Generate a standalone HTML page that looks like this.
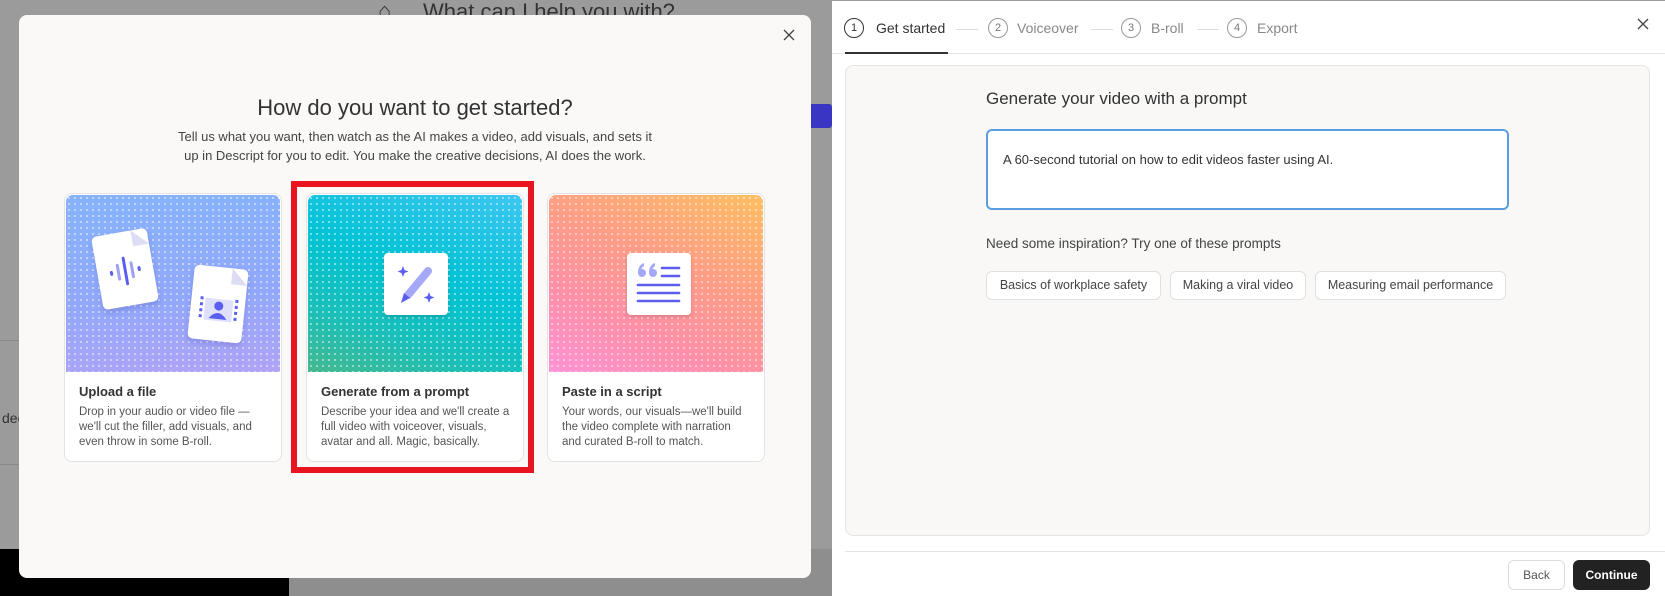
<!DOCTYPE html>
<html><head><meta charset="utf-8"><style>
*{box-sizing:border-box;margin:0;padding:0}
body{width:1665px;height:596px;overflow:hidden;background:#9b9b9b;font-family:"Liberation Sans",sans-serif;position:relative;color:#222}
.abs{position:absolute}
.modal{left:19px;top:15px;width:792px;height:563px;background:#faf9f8;border-radius:8px}
.card{position:absolute;top:193px;width:218px;height:269px;background:#fff;border:1px solid #e3e3e3;border-radius:8px;overflow:hidden}
.img{position:absolute;left:1px;top:1px;right:1px;height:177px;border-radius:7px 7px 0 0}
.dots{position:absolute;inset:0;background-image:radial-gradient(rgba(255,255,255,.55) 0.8px,transparent 1.2px);background-size:6px 6px}
.ct{position:absolute;left:14px;top:190px;font-size:13px;font-weight:bold;color:#333}
.cd{position:absolute;left:14px;top:211px;width:195px;font-size:11.5px;line-height:15px;color:#555}
.ibox{position:absolute;width:64px;height:62px;background:#fff;border-radius:4px;box-shadow:0 2px 4px rgba(0,0,0,.15)}
.chip{position:absolute;top:205px;height:29px;border:1px solid #e0e0e0;border-radius:6px;background:#fff;font-size:12.5px;color:#444;text-align:center;line-height:27px}
.step{position:absolute;top:17px;width:20px;height:20px;border:1px solid #999;border-radius:50%;font-size:11px;text-align:center;line-height:18px;color:#777}
.sl{position:absolute;top:19px;font-size:14px;color:#888}
.dash{position:absolute;top:28px;height:1px;background:#ddd}
</style></head><body>
<div class="abs" style="left:0;top:549px;width:289px;height:47px;background:#000"></div>
<div class="abs" style="left:289px;top:549px;width:543px;height:47px;background:#8e8e8e"></div>
<div class="abs" style="left:0;top:340px;width:19px;height:125px;border-top:1px solid #888;border-bottom:1px solid #888"></div>
<div class="abs" style="left:2px;top:410px;font-size:14px;color:#333">dec</div>
<div class="abs" style="left:770px;top:104px;width:62px;height:24px;background:#3b35c4;border-radius:3px"></div>
<div class="abs" style="left:378px;top:-2px;font-size:22px;color:#333">⌂</div>
<div class="abs" style="left:423px;top:-1px;font-size:22px;color:#333">What can I help you with?</div>

<div class="abs modal">
  <svg class="abs" style="right:16px;top:14px" width="12" height="12"><path d="M1 1L11 11M11 1L1 11" stroke="#444" stroke-width="1.3"/></svg>
  <div class="abs" style="left:0;width:792px;top:80px;text-align:center;font-size:22px;color:#333">How do you want to get started?</div>
  <div class="abs" style="left:0;width:792px;top:113px;text-align:center;font-size:13px;line-height:18.5px;color:#444">Tell us what you want, then watch as the AI makes a video, add visuals, and sets it<br>up in Descript for you to edit. You make the creative decisions, AI does the work.</div>
</div>

<div class="abs" style="left:291px;top:181px;width:243px;height:292px;border:6px solid #e8141f"></div>

<div class="card" style="left:64px">
  <div class="img" style="background:linear-gradient(175deg,#86b3fb 0%,#93a8fb 60%,#b0a3f6 100%)"><div class="dots"></div>
    <div class="abs" style="left:31px;top:37px;width:56px;height:74px;background:#fff;border-radius:5px;transform:rotate(-10deg);box-shadow:0 3px 6px rgba(60,60,160,.25)">
      <svg width="56" height="74" class="abs" style="left:0;top:0"><path d="M40 0 L56 16 L40 16Z" fill="#dcdcf5"/><g stroke="#5a5ff0" stroke-width="3" stroke-linecap="round"><line x1="14" y1="38" x2="14" y2="40"/><line x1="21" y1="32" x2="21" y2="46" stroke="#9ea2f5"/><line x1="28" y1="26" x2="28" y2="52"/><line x1="35" y1="32" x2="35" y2="46" stroke="#9ea2f5"/><line x1="42" y1="38" x2="42" y2="40"/></g></svg>
    </div>
    <div class="abs" style="left:125px;top:72px;width:54px;height:74px;background:#fff;border-radius:5px;transform:rotate(6deg);box-shadow:0 3px 6px rgba(60,60,160,.25)">
      <svg width="54" height="74" class="abs"><path d="M38 0 L54 16 L38 16Z" fill="#dcdcf5"/><rect x="14" y="32" width="28" height="22" fill="#dfe0fb"/><circle cx="28" cy="39" r="4.5" fill="#5a5ff0"/><path d="M19 52 Q28 40 37 52Z" fill="#5a5ff0"/><g fill="#5a5ff0"><rect x="9" y="31" width="3" height="3"/><rect x="9" y="37" width="3" height="3"/><rect x="9" y="43" width="3" height="3"/><rect x="9" y="49" width="3" height="3"/><rect x="44" y="31" width="3" height="3"/><rect x="44" y="37" width="3" height="3"/><rect x="44" y="43" width="3" height="3"/><rect x="44" y="49" width="3" height="3"/></g></svg>
    </div>
  </div>
  <div class="ct">Upload a file</div>
  <div class="cd">Drop in your audio or video file —<br>we'll cut the filler, add visuals, and<br>even throw in some B-roll.</div>
</div>

<div class="card" style="left:306px">
  <div class="img" style="background:linear-gradient(200deg,#3ec6f2 0%,#00c3d4 45%,#1bbfb8 75%,#45b88f 100%)"><div class="dots"></div>
    <div class="ibox" style="left:76px;top:58px"><svg width="64" height="62"><g fill="#5a5ff0"><path d="M19 13 l1.5 4 4 1.5 -4 1.5 -1.5 4 -1.5 -4 -4 -1.5 4 -1.5Z"/><path d="M45 39 l1.5 4 4 1.5 -4 1.5 -1.5 4 -1.5 -4 -4 -1.5 4 -1.5Z"/></g><line x1="44" y1="18" x2="24" y2="42" stroke="#a5a8f7" stroke-width="8" stroke-linecap="round"/><path d="M17 50 L20 40 L26 45Z" fill="#5a5ff0"/></svg></div>
  </div>
  <div class="ct">Generate from a prompt</div>
  <div class="cd">Describe your idea and we'll create a<br>full video with voiceover, visuals,<br>avatar and all. Magic, basically.</div>
</div>

<div class="card" style="left:547px">
  <div class="img" style="background:linear-gradient(205deg,#ffbf62 0%,#ff9d86 40%,#ff8fa8 70%,#ff93d4 100%)"><div class="dots"></div>
    <div class="ibox" style="left:78px;top:58px"><svg width="64" height="62"><g fill="#a5a8f7"><circle cx="15" cy="20" r="4"/><path d="M11 20 Q11 12 17 10 L17 13 Q14 15 14 18Z"/><circle cx="26" cy="20" r="4"/><path d="M22 20 Q22 12 28 10 L28 13 Q25 15 25 18Z"/></g><g stroke="#5a5ff0" stroke-width="2.6" stroke-linecap="round"><line x1="35" y1="15" x2="52" y2="15"/><line x1="35" y1="23" x2="52" y2="23"/><line x1="11" y1="32" x2="52" y2="32"/><line x1="11" y1="40" x2="52" y2="40"/><line x1="11" y1="48" x2="52" y2="48"/></g></svg></div>
  </div>
  <div class="ct">Paste in a script</div>
  <div class="cd">Your words, our visuals—we'll build<br>the video complete with narration<br>and curated B-roll to match.</div>
</div>

<!-- right panel -->
<div class="abs" style="left:832px;top:1px;width:833px;height:595px;background:#fff">
  <div class="step" style="left:12px;border-color:#333;color:#333">1</div>
  <div class="sl" style="left:44px;color:#333">Get started</div>
  <div class="dash" style="left:124px;width:22px"></div>
  <div class="step" style="left:156px">2</div>
  <div class="sl" style="left:185px">Voiceover</div>
  <div class="dash" style="left:259px;width:22px"></div>
  <div class="step" style="left:289px">3</div>
  <div class="sl" style="left:319px">B-roll</div>
  <div class="dash" style="left:365px;width:22px"></div>
  <div class="step" style="left:395px">4</div>
  <div class="sl" style="left:425px">Export</div>
  <svg class="abs" style="right:16px;top:17px" width="12" height="12"><path d="M1 1L11 11M11 1L1 11" stroke="#444" stroke-width="1.3"/></svg>
  <div class="abs" style="left:0;top:52px;width:833px;height:1px;background:#e4e4e4"></div>
  <div class="abs" style="left:13px;top:51px;width:103px;height:2px;background:#333"></div>
  <div class="abs" style="left:13px;top:64px;width:805px;height:471px;background:#f9f8f7;border:1px solid #e4e4e4;border-radius:8px">
    <div class="abs" style="left:140px;top:23px;font-size:17px;color:#333">Generate your video with a prompt</div>
    <div class="abs" style="left:140px;top:63px;width:523px;height:81px;background:#fff;border:2px solid #5a9ee0;border-radius:6px">
      <div class="abs" style="left:15px;top:21px;font-size:13px;color:#333">A 60-second tutorial on how to edit videos faster using AI.</div>
    </div>
    <div class="abs" style="left:140px;top:170px;font-size:13.5px;color:#444">Need some inspiration? Try one of these prompts</div>
    <div class="chip" style="left:140px;width:175px">Basics of workplace safety</div>
    <div class="chip" style="left:324px;width:136px">Making a viral video</div>
    <div class="chip" style="left:469px;width:191px">Measuring email performance</div>
  </div>
  <div class="abs" style="left:13px;top:550px;width:820px;height:1px;background:#e4e4e4"></div>
  <div class="abs" style="left:676px;top:559px;width:57px;height:30px;border:1px solid #ddd;border-radius:6px;font-size:12px;color:#555;text-align:center;line-height:28px">Back</div>
  <div class="abs" style="left:741px;top:559px;width:77px;height:30px;background:#222;border-radius:6px;font-size:12px;font-weight:bold;color:#fff;text-align:center;line-height:30px">Continue</div>
</div>
</body></html>
